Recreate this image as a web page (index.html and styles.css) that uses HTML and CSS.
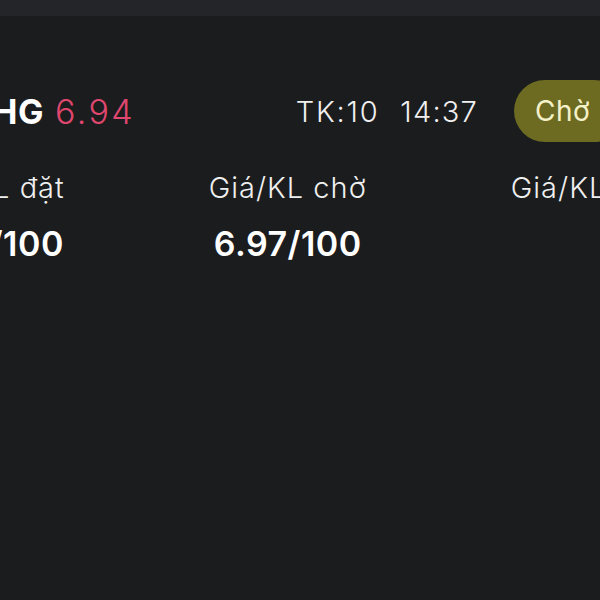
FILE: index.html
```html
<!DOCTYPE html>
<html lang="vi">
<head>
<meta charset="utf-8">
<link rel="stylesheet" href="styles.css">
</head>
<body>
<div class="page">
  <div class="topbar"></div>
  <div class="header">
    <div class="ticker">
      <span class="symbol">HG</span>
      <span class="price">6.94</span>
    </div>
    <div class="meta">
      <span class="tk">TK:10</span>
      <span class="time">14:37</span>
      <span class="status">Chờ</span>
    </div>
  </div>
  <div class="table">
    <div class="col">
      <div class="label">Giá/KL đặt</div>
      <div class="value">6.97/100</div>
    </div>
    <div class="col">
      <div class="label">Giá/KL chờ</div>
      <div class="value">6.97/100</div>
    </div>
    <div class="col">
      <div class="label">Giá/KL khớp</div>
      <div class="value"></div>
    </div>
  </div>
</div>
</body>
</html>
```

FILE: styles.css
```css
html, body {
  margin: 0;
  padding: 0;
  background: #1b1c1e;
  height: 100%;
}
.page {
  width: 600px;
  height: 600px;
  overflow: hidden;
  background: #1b1c1e;
  font-family: Inter, "Noto Sans", sans-serif;
  color: #f2f2f2;
}
.topbar {
  height: 16px;
  background: #242528;
}
.header {
  display: flex;
  align-items: center;
  width: 633px;
  margin-left: -8px;
  margin-top: 64px;
  height: 62px;
}
.ticker {
  display: flex;
  align-items: baseline;
  gap: 11px;
  font-size: 34px;
}
.symbol {
  font-weight: 700;
  color: #ffffff;
  letter-spacing: 0.5px;
}
.price {
  font-weight: 300;
  color: #e0476f;
  letter-spacing: 2.4px;
}
.meta {
  margin-left: auto;
  display: flex;
  align-items: center;
  font-size: 29px;
  font-weight: 300;
  color: #f0f0f0;
}
.tk {
  letter-spacing: 1.8px;
  margin-right: 21px;
}
.time {
  letter-spacing: 1.2px;
  margin-right: 36px;
}
.status {
  flex-shrink: 0;
  box-sizing: border-box;
  width: 111px;
  height: 62px;
  border-radius: 31px;
  background: #6d6a22;
  color: #f5f1c9;
  font-size: 28px;
  font-weight: 400;
  letter-spacing: 0.5px;
  display: flex;
  align-items: center;
  padding-left: 21px;
}
.table {
  display: flex;
  gap: 144px;
  margin-left: -85px;
  margin-top: 28px;
}
.col {
  flex-shrink: 0;
  text-align: center;
}
.label {
  font-size: 29px;
  font-weight: 300;
  color: #efefef;
  line-height: 36px;
  letter-spacing: 1px;
  white-space: nowrap;
}
.value {
  font-size: 34px;
  font-weight: 600;
  color: #ffffff;
  line-height: 40px;
  height: 40px;
  margin-top: 18px;
  letter-spacing: 0.5px;
  white-space: nowrap;
}
```
